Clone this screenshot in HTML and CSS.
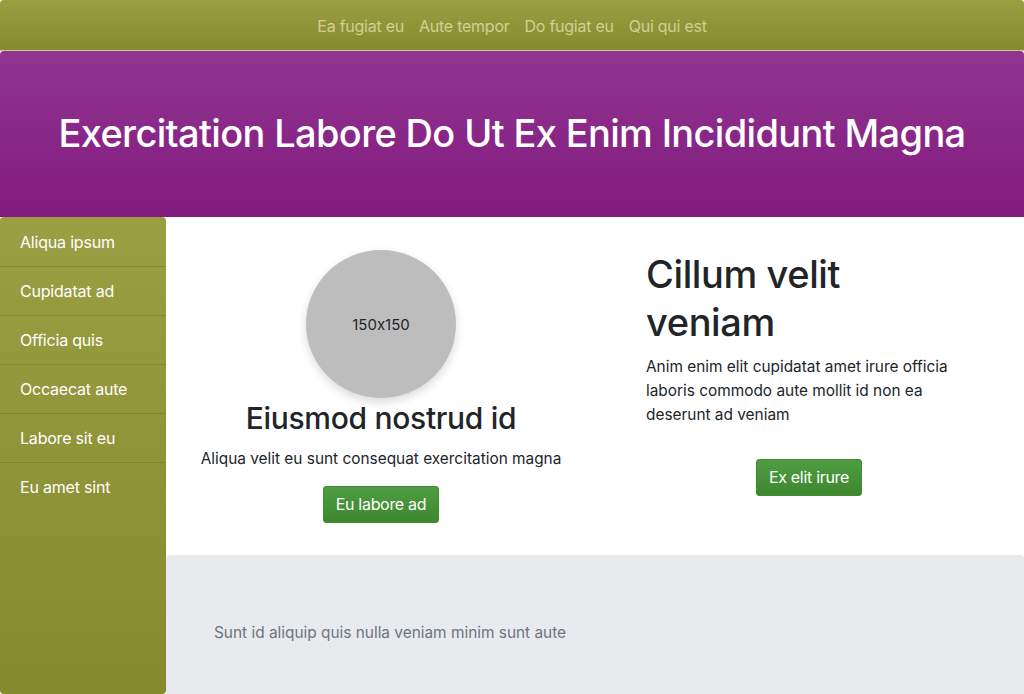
FILE: index.html
```html
<!DOCTYPE html>
<html>
<head>
<meta charset="utf-8">
<link rel="stylesheet" href="styles.css">
</head>
<body>
<nav class="topnav">
  <a href="#">Ea fugiat eu</a>
  <a href="#">Aute tempor</a>
  <a href="#">Do fugiat eu</a>
  <a href="#">Qui qui est</a>
</nav>
<header class="hero">
  <h1>Exercitation Labore Do Ut Ex Enim Incididunt Magna</h1>
</header>
<div class="layout">
  <aside class="sidebar">
    <a href="#">Aliqua ipsum</a>
    <a href="#">Cupidatat ad</a>
    <a href="#">Officia quis</a>
    <a href="#">Occaecat aute</a>
    <a href="#">Labore sit eu</a>
    <a href="#">Eu amet sint</a>
  </aside>
  <div class="content">
    <main class="main">
      <section class="col col-left">
        <div class="avatar">150x150</div>
        <h3>Eiusmod nostrud id</h3>
        <p>Aliqua velit eu sunt consequat exercitation magna</p>
        <a class="btn" href="#">Eu labore ad</a>
      </section>
      <section class="col col-right">
        <h2>Cillum velit veniam</h2>
        <p>Anim enim elit cupidatat amet irure officia laboris commodo aute mollit id non ea deserunt ad veniam</p>
        <div class="btn-wrap"><a class="btn" href="#">Ex elit irure</a></div>
      </section>
    </main>
    <footer class="footer">
      <p>Sunt id aliquip quis nulla veniam minim sunt aute</p>
    </footer>
  </div>
</div>
</body>
</html>
```

FILE: styles.css
```css
* { box-sizing: border-box; }
html, body { margin: 0; padding: 0; }
body {
  font-family: Inter, "Noto Sans", "Liberation Sans", sans-serif;
  font-feature-settings: "calt" 0;
  color: #212529;
  background: #fff;
  width: 1024px;
  height: 694px;
  overflow: hidden;
}
a { text-decoration: none; }

.topnav {
  height: 51px;
  display: flex;
  justify-content: center;
  align-items: center;
  gap: 15px;
  padding-top: 2px;
  background: linear-gradient(to bottom, #9b9f43, #868a2e);
  border-radius: 4px 4px 0 0;
  border-bottom: 1px solid #c8c6a0;
}
.topnav a {
  color: rgba(236, 232, 185, 0.72);
  font-size: 16px;
  letter-spacing: -0.25px;
}

.hero {
  height: 166px;
  display: flex;
  align-items: center;
  justify-content: center;
  background: linear-gradient(to bottom, #903591, #821a7e);
  border-radius: 4px 4px 0 0;
}
.hero h1 {
  margin: 0;
  padding-bottom: 2px;
  color: #fff;
  font-size: 38px;
  font-weight: 500;
  letter-spacing: -0.65px;
}

.layout {
  display: flex;
  height: 477px;
}
.sidebar {
  width: 166px;
  flex: none;
  display: flex;
  flex-direction: column;
  padding-top: 1px;
  background: linear-gradient(to bottom, #9b9f43, #868a2e);
  border-radius: 4px;
}
.sidebar a {
  display: block;
  height: 49px;
  line-height: 49px;
  padding-left: 20px;
  color: #fff;
  font-size: 16px;
  letter-spacing: -0.2px;
  border-bottom: 1px solid rgba(110, 112, 30, 0.45);
}
.sidebar a:last-child { border-bottom: none; }

.content {
  flex: 1;
  display: flex;
  flex-direction: column;
}
.main {
  display: flex;
  gap: 102px;
  padding: 33px 52px 32px;
  height: 338px;
}
.col { width: 326px; }
.col-left {
  display: flex;
  flex-direction: column;
  align-items: center;
  text-align: center;
}
.avatar {
  width: 150px;
  height: 150px;
  border-radius: 50%;
  background: #bdbdbd;
  display: flex;
  align-items: center;
  justify-content: center;
  font-size: 15px;
  color: #212529;
  box-shadow: 0 4px 10px rgba(0, 0, 0, 0.15);
}
.col-left h3 {
  margin: 2px 0 0;
  font-size: 30px;
  font-weight: 500;
  line-height: 36px;
  letter-spacing: -0.3px;
  white-space: nowrap;
}
.col-left p {
  margin: 11px 0 0;
  font-size: 15.4px;
  line-height: 24px;
  white-space: nowrap;
}
.col-left .btn { margin-top: 15px; }

.col-right h2 {
  margin: 0;
  font-size: 38px;
  font-weight: 500;
  line-height: 48px;
  letter-spacing: -0.4px;
}
.col-right p {
  margin: 9px 0 0;
  font-size: 15.4px;
  line-height: 24px;
}
.btn-wrap {
  display: flex;
  justify-content: center;
  margin-top: 32px;
}
.btn {
  display: inline-block;
  height: 37px;
  line-height: 35px;
  padding: 0 12px;
  color: #fff;
  font-size: 16px;
  border-radius: 3px;
  border: 1px solid #3f8c33;
  background: linear-gradient(to bottom, #4f9c43, #3d882f);
  letter-spacing: -0.3px;
}

.footer {
  flex: 1;
  background: #e9eaee;
  border-radius: 4px 4px 0 0;
  display: flex;
  align-items: center;
  padding: 0 48px;
}
.footer p {
  margin: 0;
  padding-top: 16px;
  color: #6c757d;
  font-size: 15.4px;
}
```
